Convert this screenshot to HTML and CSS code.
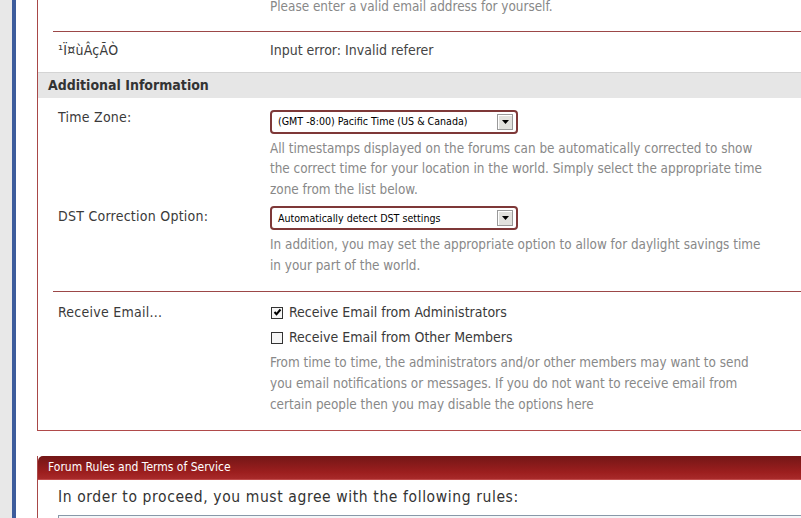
FILE: index.html
```html
<!DOCTYPE html>
<html lang="en">
<head>
<meta charset="UTF-8">
<meta name="viewport" content="width=device-width, initial-scale=1.0">
<title>Register</title>
<link rel="stylesheet" href="styles.css">
</head>
<body>
<div class="gutter"></div>
<div class="page">
<div class="panel">
<div class="row first">
<div class="label"></div>
<div class="value"><p class="help">Please enter a valid email address for yourself.</p></div>
</div>
<div class="row sep error-row">
<div class="label">¹Ï¤ùÂçÃÒ</div>
<div class="value text">Input error: Invalid referer</div>
</div>
<h3 class="band">Additional Information</h3>
<div class="row tz">
<div class="label">Time Zone:</div>
<div class="value">
<div class="select"><span>(GMT -8:00) Pacific Time (US &amp; Canada)</span><span class="arrow"><svg width="7" height="4" viewBox="0 0 7 4"><path d="M0 0h7L3.5 4z" fill="#000"/></svg></span></div>
<p class="help">All timestamps displayed on the forums can be automatically corrected to show the correct time for your location in the world. Simply select the appropriate time zone from the list below.</p>
</div>
</div>
<div class="row dst">
<div class="label">DST Correction Option:</div>
<div class="value">
<div class="select"><span>Automatically detect DST settings</span><span class="arrow"><svg width="7" height="4" viewBox="0 0 7 4"><path d="M0 0h7L3.5 4z" fill="#000"/></svg></span></div>
<p class="help">In addition, you may set the appropriate option to allow for daylight savings time in your part of the world.</p>
</div>
</div>
<div class="row sep email">
<div class="label">Receive Email...</div>
<div class="value">
<label class="check"><span class="box"><svg width="9" height="9" viewBox="0 0 9 9"><path d="M1.5 4l2 2.2L7.5 1.5" stroke="#000" stroke-width="2" fill="none"/></svg></span>Receive Email from Administrators</label>
<label class="check"><span class="box"></span>Receive Email from Other Members</label>
<p class="help">From time to time, the administrators and/or other members may want to send you email notifications or messages. If you do not want to receive email from certain people then you may disable the options here</p>
</div>
</div>
</div>

<div class="rules">
<h2 class="rules-head">Forum Rules and Terms of Service</h2>
<div class="rules-body">
<p>In order to proceed, you must agree with the following rules:</p>
<div class="rules-box"></div>
</div>
</div>
</div>
</body>
</html>
```

FILE: styles.css
```css
html {
overflow: hidden;
}

body {
margin: 0;
display: flex;
height: 518px;
overflow: hidden;
background-color: #fff;
font-family: 'DejaVu Sans Condensed', 'DejaVu Sans', sans-serif;
font-size: 14px;
color: #3a3a3a;
}

.gutter {
width: 12px;
flex-shrink: 0;
background-color: #e8e8e8;
border-right: 4px solid #3d5c9c;
}

.page {
padding-left: 21px;
flex-shrink: 0;
width: 800px;
}

.panel {
border-left: 1px solid #a84848;
border-bottom: 1px solid #b04a4a;
padding-bottom: 15px;
}

.row {
display: grid;
grid-template-columns: 212px 1fr;
padding-left: 20px;
line-height: 21px;
}

.label {
letter-spacing: 0.25px;
}

.row.first {
margin-top: -3px;
padding-bottom: 13px;
}

.row.sep {
border-top: 1px solid #9c4848;
margin-left: 15px;
padding-left: 5px;
}

.help {
margin: 0;
color: #888;
font-size: 13.4px;
line-height: 20.5px;
max-width: 500px;
}

.error-row {
padding-top: 8px;
padding-bottom: 11px;
}

.error-row .text {
color: #444;
}

.band {
margin: 0;
background-color: #e6e6e6;
border-top: 1px solid #d4d4d4;
height: 25px;
line-height: 25px;
padding-left: 10px;
font-size: 14px;
color: #333;
}

.tz {
padding-top: 9px;
}

.dst {
padding-top: 6px;
padding-bottom: 15px;
}

.select {
display: flex;
justify-content: space-between;
align-items: center;
height: 20px;
width: 238px;
border: 2px solid #7e3838;
border-radius: 4px;
margin: 3px 0 5px;
padding-left: 6px;
font-size: 10.6px;
color: #000;
}

.dst .select {
margin-top: 0;
}

.arrow {
display: flex;
align-items: center;
justify-content: center;
width: 14px;
height: 14px;
margin-right: 3px;
background-color: #e2e2de;
border: 1px solid #9a9a9a;
box-shadow: inset 1px 1px 0 #fff;
}

.email {
padding-top: 10px;
}

.check {
display: flex;
align-items: center;
height: 21px;
margin-bottom: 4px;
color: #3a3a3a;
}

.box {
display: flex;
align-items: center;
justify-content: center;
width: 10px;
height: 10px;
border: 1px solid #333;
margin: 0 6px 0 1px;
background-color: #f6f6f6;
}

.email .help {
margin-top: 4px;
line-height: 21px;
}

.rules {
margin-top: 25px;
border-left: 1px solid #a84848;
}

.rules-head {
margin: 0;
height: 23px;
line-height: 23px;
padding-left: 10px;
font-size: 12px;
font-weight: normal;
color: #fff;
border-top-left-radius: 5px;
background: linear-gradient(#731616, #9c1e1e 70%, #a82a2a);
border-bottom: 1px solid #c04a4a;
}

.rules-body {
padding: 7px 0 0 20px;
}

.rules-body p {
margin: 0 0 7px;
line-height: 21px;
font-size: 15.5px;
letter-spacing: 0.6px;
color: #333;
}

.rules-box {
height: 40px;
border: 1px solid #8898a8;
background-color: #f4f6f8;
}
```
